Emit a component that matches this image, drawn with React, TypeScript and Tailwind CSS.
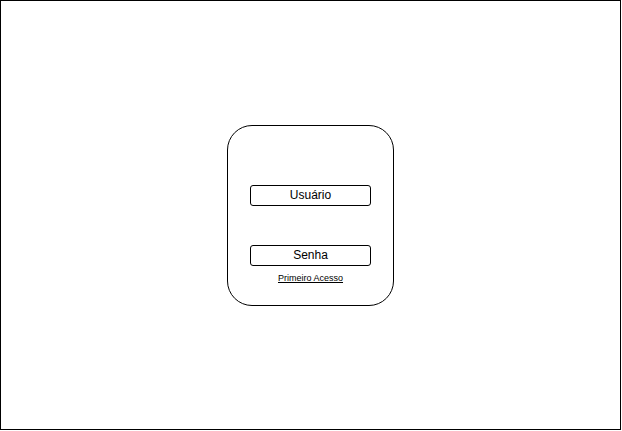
export default function App() {
  return (
    <div className="w-[622px] h-[431px] bg-white">
      {/* Canvas frame */}
      <div className="w-[621px] h-[430px] border border-black flex items-center justify-center font-['Liberation_Sans',Arial,sans-serif] text-black">
        {/* Login card */}
        <div className="w-[167px] h-[181px] border border-black rounded-[25px] flex flex-col items-center pt-[59px]">
          <div className="w-[121px] h-[21px] border border-black rounded-[3px] flex items-center justify-center text-[12px] leading-none">
            Usuário
          </div>
          <div className="w-[121px] h-[21px] mt-[39px] border border-black rounded-[3px] flex items-center justify-center text-[12px] leading-none">
            Senha
          </div>
          <a href="#" className="mt-[7px] text-[9px] leading-[11px] underline">
            Primeiro Acesso
          </a>
        </div>
      </div>
    </div>
  );
}
